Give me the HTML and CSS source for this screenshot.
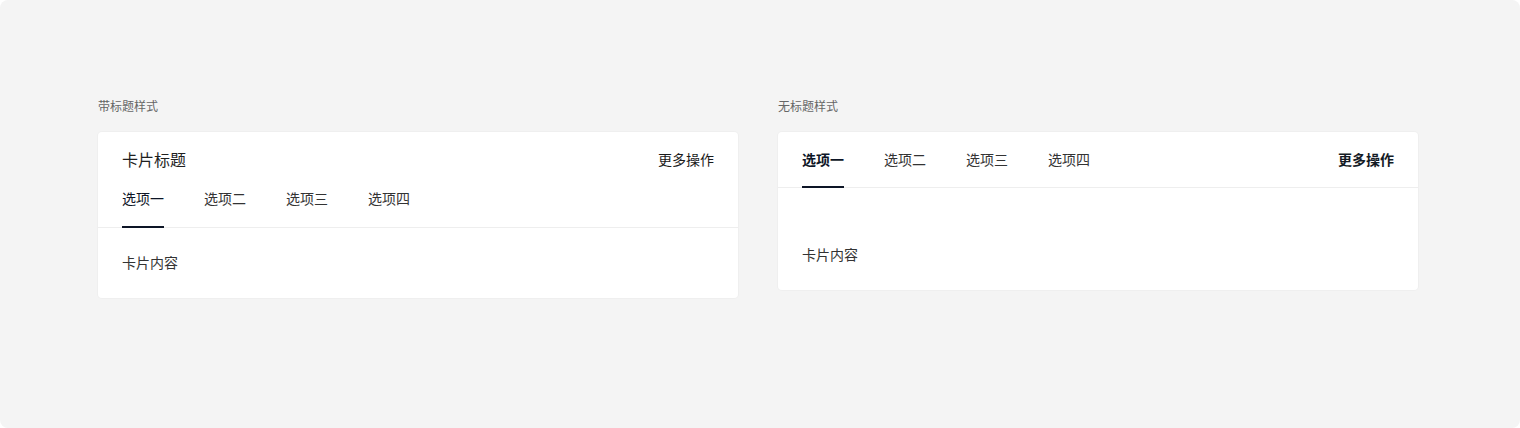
FILE: index.html
```html
<!DOCTYPE html>
<html lang="zh-CN">
<head>
<meta charset="utf-8">
<link rel="stylesheet" href="styles.css">
</head>
<body>
<div class="page">
  <section class="demo">
    <div class="label">带标题样式</div>
    <div class="card">
      <div class="card-head">
        <div class="title-row">
          <span class="card-title">卡片标题</span>
          <span class="more">更多操作</span>
        </div>
        <div class="tabs">
          <span class="tab active">选项一</span>
          <span class="tab">选项二</span>
          <span class="tab">选项三</span>
          <span class="tab">选项四</span>
        </div>
      </div>
      <div class="card-body">卡片内容</div>
    </div>
  </section>
  <section class="demo">
    <div class="label">无标题样式</div>
    <div class="card">
      <div class="card-head tabs-head">
        <div class="tabs">
          <span class="tab active">选项一</span>
          <span class="tab">选项二</span>
          <span class="tab">选项三</span>
          <span class="tab">选项四</span>
        </div>
        <span class="more bold">更多操作</span>
      </div>
      <div class="card-body tall">卡片内容</div>
    </div>
  </section>
</div>
</body>
</html>
```
FILE: styles.css
```css
* { box-sizing: border-box; }
html, body { margin: 0; background: #ffffff; }
body {
  font-family: "Noto Sans CJK SC", "Noto Sans", sans-serif;
  color: #1f1f1f;
}
.page {
  width: 1520px;
  height: 428px;
  background: #f4f4f4;
  border-radius: 8px;
  padding: 96px 0 0 98px;
  display: grid;
  grid-template-columns: 640px 640px;
  column-gap: 40px;
  align-items: start;
}
.label {
  font-size: 12px;
  line-height: 20px;
  color: #666666;
  margin-bottom: 16px;
}
.card {
  background: #ffffff;
  border-radius: 4px;
  box-shadow: 0 0 0 1px #efefef;
}
.card-head {
  padding: 0 24px;
  border-bottom: 1px solid #eeeeee;
}
.title-row {
  display: flex;
  justify-content: space-between;
  align-items: center;
  padding-top: 15px;
  padding-bottom: 1px;
  height: 40px;
}
.card-title {
  font-size: 16px;
  line-height: 24px;
  color: #1f1f1f;
}
.more {
  font-size: 14px;
  line-height: 22px;
  color: #1a1a1a;
}
.more.bold { font-weight: 600; color: #141a24; }
.tabs {
  display: flex;
  gap: 40px;
}
.tab {
  font-size: 14px;
  line-height: 22px;
  height: 55px;
  padding-top: 15px;
  color: #333333;
  position: relative;
}
.tab.active { color: #0d1526; }
.tabs-head .tab { padding-top: 16px; }
.tabs-head .tab.active { font-weight: 600; }
.tab.active::after {
  content: "";
  position: absolute;
  left: 0;
  right: 0;
  bottom: -1px;
  height: 2px;
  background: #0d1526;
}
.tabs-head {
  display: flex;
  justify-content: space-between;
  align-items: flex-start;
}
.tabs-head .more { padding-top: 16px; }
.card-body {
  padding: 23px 24px 25px;
  font-size: 14px;
  line-height: 22px;
  color: #333333;
}
.card-body.tall { padding-top: 55px; }
```
